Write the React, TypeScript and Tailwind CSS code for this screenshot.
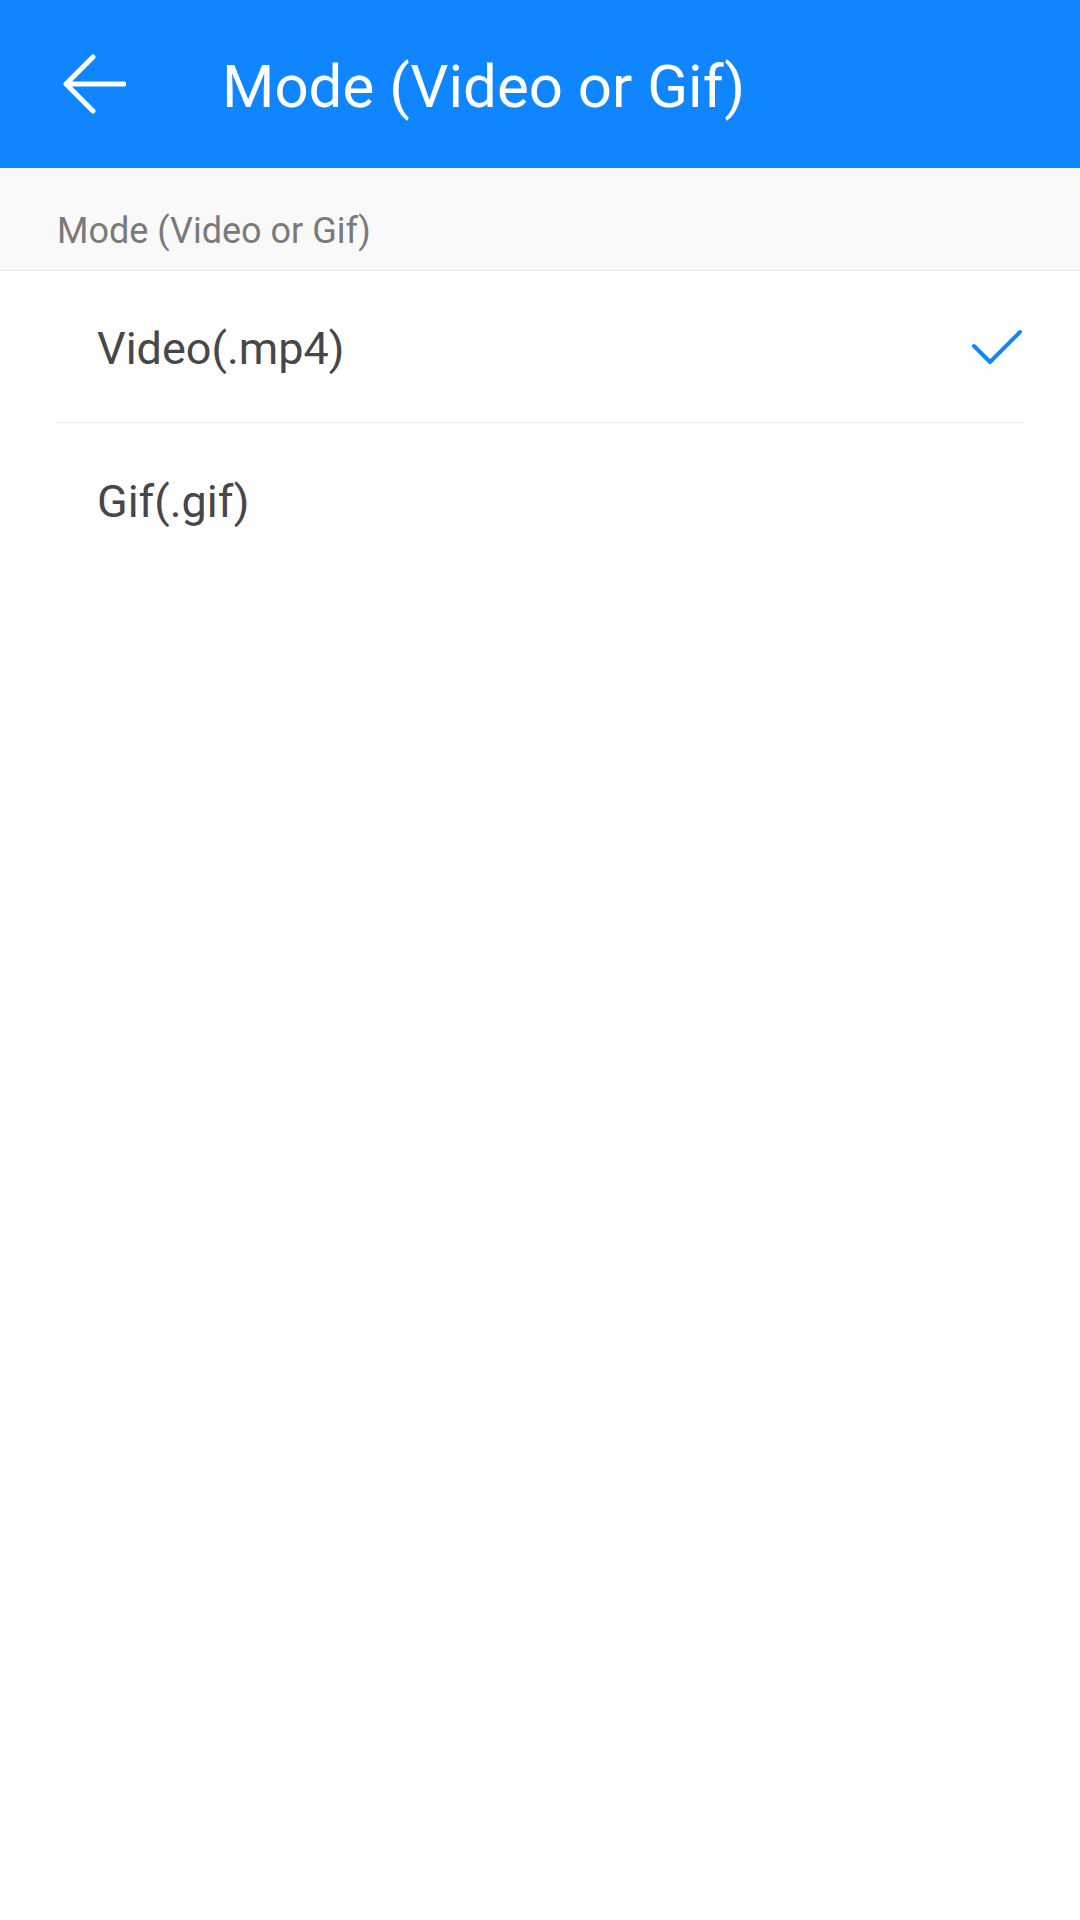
import { useState } from 'react';

const options = [
  { id: 'video', label: 'Video(.mp4)' },
  { id: 'gif', label: 'Gif(.gif)' },
];

function BackArrow() {
  return (
    <svg width="64" height="64" viewBox="0 0 64 64" fill="none" className="shrink-0">
      <path
        d="M62 32H5M31 5L4 32L31 59"
        stroke="white"
        strokeWidth="5"
        strokeLinecap="round"
        strokeLinejoin="round"
      />
    </svg>
  );
}

function Check() {
  return (
    <svg width="56" height="40" viewBox="0 0 56 40" fill="none" className="shrink-0">
      <path
        d="M8 17L24 33L54 3"
        stroke="#1485fb"
        strokeWidth="4"
        strokeLinecap="round"
        strokeLinejoin="round"
      />
    </svg>
  );
}

export default function App() {
  const [mode, setMode] = useState('video');

  return (
    <div
      className="w-[1080px] min-h-[1920px] bg-white"
      style={{ fontFamily: 'Roboto, "Noto Sans", sans-serif' }}
    >
      {/* toolbar */}
      <div className="h-[168px] bg-[#0f86ff] flex items-center pl-[62px]">
        <BackArrow />
        <h1 className="ml-[96px] mt-[5px] text-[60px] leading-none text-white font-normal">
          Mode (Video or Gif)
        </h1>
      </div>

      {/* section label */}
      <div className="h-[103px] bg-[#f9f9f9] border-b border-[#e6e6e6] pl-[57px] pt-[45px]">
        <p className="text-[36px] leading-none text-[#7a7a7a]">Mode (Video or Gif)</p>
      </div>

      {/* options */}
      <div className="mx-[56px]">
        {options.map((opt, i) => (
          <div
            key={opt.id}
            onClick={() => setMode(opt.id)}
            className={
              i < options.length - 1
                ? 'h-[152px] flex items-center justify-between pl-[41px] pr-[2px] pt-[4px] border-b border-[#ebebeb] cursor-pointer'
                : 'h-[152px] flex items-center justify-between pl-[41px] pr-[2px] pt-[4px] cursor-pointer'
            }
          >
            <span className="text-[45px] leading-none text-[#474747]">{opt.label}</span>
            {mode === opt.id && <Check />}
          </div>
        ))}
      </div>
    </div>
  );
}
